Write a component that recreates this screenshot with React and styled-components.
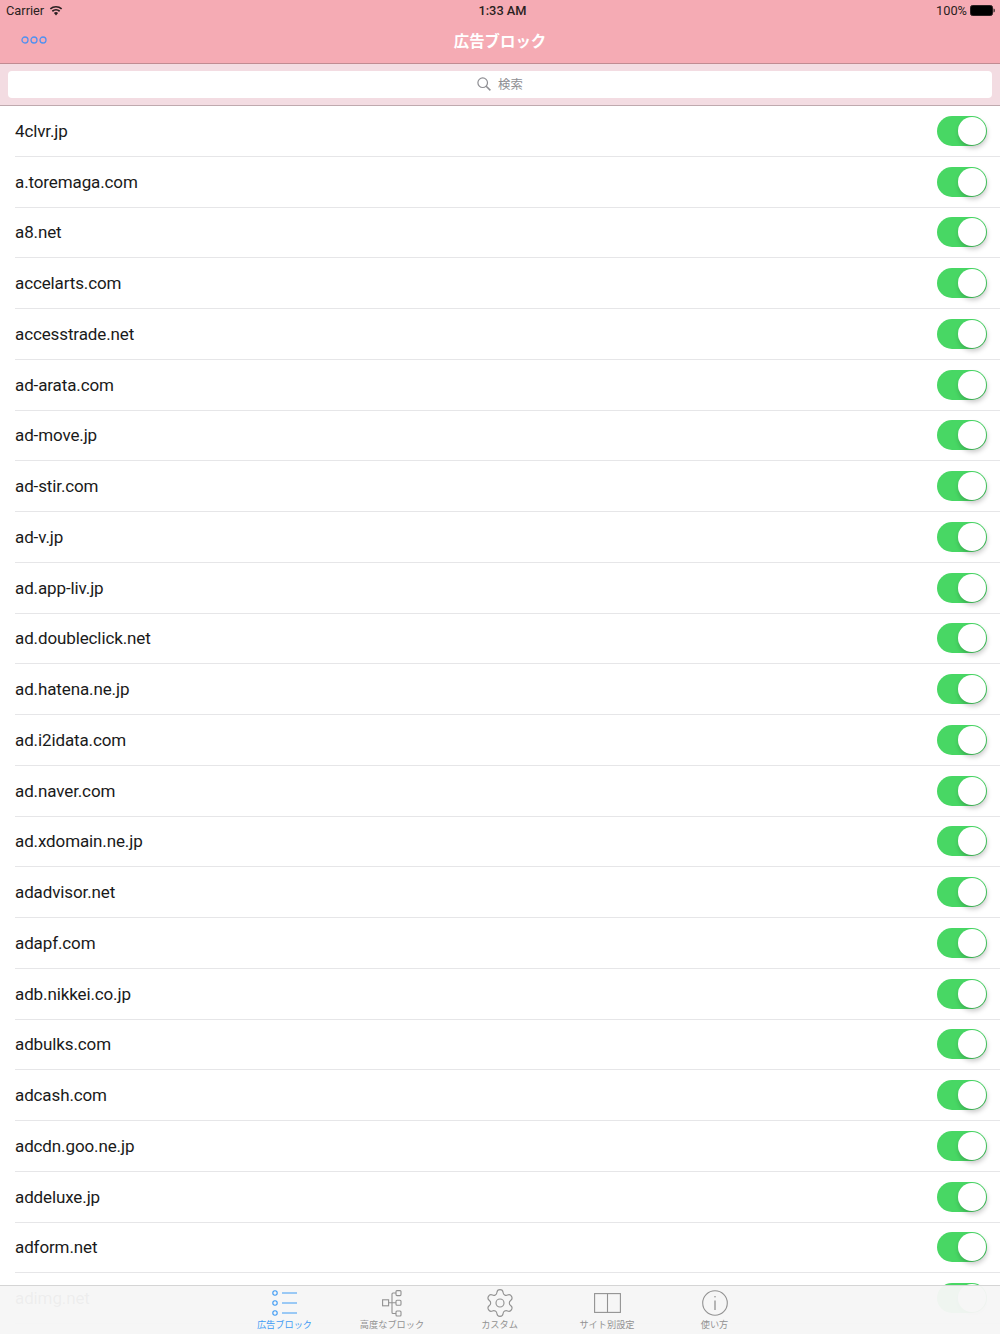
import styled, { createGlobalStyle } from 'styled-components'
import { Settings } from 'lucide-react'

const hosts = [
  '4clvr.jp', 'a.toremaga.com', 'a8.net', 'accelarts.com', 'accesstrade.net', 'ad-arata.com',
  'ad-move.jp', 'ad-stir.com', 'ad-v.jp', 'ad.app-liv.jp', 'ad.doubleclick.net', 'ad.hatena.ne.jp',
  'ad.i2idata.com', 'ad.naver.com', 'ad.xdomain.ne.jp', 'adadvisor.net', 'adapf.com', 'adb.nikkei.co.jp',
  'adbulks.com', 'adcash.com', 'adcdn.goo.ne.jp', 'addeluxe.jp', 'adform.net', 'adimg.net',
]

const GlobalStyle = createGlobalStyle`
  html, body {
    margin: 0;
    padding: 0;
    background: #fff;
  }
  body {
    font-family: Roboto, "Noto Sans CJK JP", sans-serif;
  }
`

const Screen = styled.div`
  position: relative;
  width: 1000px;
  height: 1334px;
  overflow: hidden;
  background: #fff;
`

const NavBar = styled.header`
  height: 63px;
  background: #f5abb4;
  border-bottom: 1px solid #c08b92;
  display: flex;
  flex-direction: column;
`

const StatusBar = styled.div`
  height: 21px;
  padding: 0 5px 0 6px;
  display: grid;
  grid-template-columns: 1fr auto 1fr;
  align-items: center;
  font-size: 12.8px;
  color: #2a1f21;
`

const StatusLeft = styled.div`
  display: flex;
  align-items: center;
  gap: 5px;
`

const StatusRight = styled.div`
  display: flex;
  align-items: center;
  justify-content: flex-end;
  gap: 3px;
`

const Clock = styled.div`
  font-weight: 500;
  padding-left: 4px;
`

const NavRow = styled.div`
  flex: 1;
  display: grid;
  grid-template-columns: 1fr auto 1fr;
  align-items: center;
  padding-bottom: 4px;
`

const MoreCell = styled.div`
  padding-left: 21px;
  display: flex;
  margin-bottom: 1px;
`

const NavTitle = styled.div`
  font-family: "Noto Sans CJK JP", sans-serif;
  font-size: 15.4px;
  font-weight: 700;
  color: #fff;
`

const SearchBar = styled.div`
  height: 42px;
  box-sizing: border-box;
  padding: 7px 8px;
  background: #f3dce2;
  border-bottom: 1px solid #bfa9ae;
`

const SearchField = styled.div`
  height: 27px;
  box-sizing: border-box;
  padding-bottom: 2px;
  background: #fff;
  border-radius: 4px;
  display: flex;
  align-items: center;
  justify-content: center;
  gap: 7px;
  font-family: "Noto Sans CJK JP", sans-serif;
  font-size: 12.4px;
  color: #8e8e93;
`

const List = styled.div`
  display: flex;
  flex-direction: column;
`

const Row = styled.div`
  position: relative;
  height: 50.75px;
  box-sizing: border-box;
  padding: 0 13px 1px 15px;
  display: flex;
  align-items: center;
  justify-content: space-between;
  font-size: 17px;
  letter-spacing: -0.12px;
  color: #1a1a1a;
  &::after {
    content: '';
    position: absolute;
    left: 15px;
    right: 0;
    bottom: 0;
    height: 1px;
    background: #e6e6e8;
  }
`

const Toggle = styled.div`
  position: relative;
  width: 50px;
  height: 30px;
  border-radius: 15px;
  background: #48d764;
`

const Knob = styled.div`
  position: absolute;
  top: 1px;
  right: 1px;
  width: 28px;
  height: 28px;
  border-radius: 50%;
  background: #fff;
  box-shadow: 1px 3px 5px rgba(0, 0, 0, 0.22);
`

const TabBar = styled.nav`
  position: absolute;
  left: 0;
  right: 0;
  bottom: 0;
  height: 48px;
  padding-right: 1px;
  background: rgba(246, 246, 246, 0.96);
  border-top: 1px solid #d5d5d5;
  display: flex;
  justify-content: center;
`

const Tab = styled.div`
  width: 107.5px;
  padding-top: 1px;
  display: flex;
  flex-direction: column;
  align-items: center;
  font-family: "Noto Sans CJK JP", sans-serif;
  font-size: 9.2px;
  color: ${(props) => (props.$active ? '#3f9bf4' : '#929292')};
`

const TabIcon = styled.div`
  height: 32px;
  display: flex;
  align-items: center;
  justify-content: center;
`

const TabLabel = styled.div`
  line-height: 11px;
`

function Wifi() {
  return (
    <svg width="14" height="11" viewBox="0 0 14 11" fill="#2a1f21">
      <path d="M7 10.5 4.9 8a3.2 3.2 0 0 1 4.2 0Z" />
      <path d="M3.9 6.9 2.8 5.6a6.4 6.4 0 0 1 8.4 0L10.100 6.900a4.700 4.700 0 0 0-6.200 0Z" />
      <path d="M1.900 4.500 0.800 3.200a9.500 9.500 0 0 1 12.400 0L12.100 4.500a7.800 7.800 0 0 0-10.200 0Z" />
    </svg>
  )
}

function Battery() {
  return (
    <svg width="25" height="11" viewBox="0 0 25 11">
      <rect x="0.500" y="0.500" width="22" height="10" rx="2" fill="#000" stroke="#2a1f21" />
      <path d="M23.500 3.500c1 0 1.300.8 1.300 2s-.3 2-1.300 2Z" fill="#2a1f21" />
    </svg>
  )
}

function MoreIcon() {
  return (
    <svg width="26" height="8" viewBox="0 0 26 8" fill="none" stroke="#4f90f0" strokeWidth="1.300">
      <circle cx="4" cy="4" r="3" />
      <circle cx="13" cy="4" r="3" />
      <circle cx="22" cy="4" r="3" />
    </svg>
  )
}

function SearchIcon() {
  return (
    <svg width="14" height="14" viewBox="0 0 14 14" fill="none" stroke="#8e8e93" strokeWidth="1.200">
      <circle cx="5.700" cy="5.700" r="4.800" />
      <path d="M9.200 9.200 13.400 13.400" strokeWidth="1.500" />
    </svg>
  )
}

function ListIcon() {
  return (
    <svg width="26" height="26" viewBox="0 0 26 26" fill="none" stroke="#3f9bf4" strokeWidth="1.100">
      <circle cx="3" cy="3" r="2.200" />
      <circle cx="3" cy="13" r="2.200" />
      <circle cx="3" cy="23" r="2.200" />
      <path d="M10 3H25M10 13H25M10 23H25" />
    </svg>
  )
}

function TreeIcon() {
  return (
    <svg width="20" height="27" viewBox="0 0 20 27" fill="none" stroke="#929292" strokeWidth="1.100">
      <rect x="0.600" y="9.800" width="6" height="6" />
      <rect x="14" y="0.600" width="5" height="5" rx="1" />
      <rect x="14" y="10.300" width="5" height="5" rx="1" />
      <rect x="14" y="21" width="5" height="5" rx="1" />
      <path d="M6.600 12.800H14M14 3H11Q10 3 10 4V22.500Q10 23.500 11 23.500H14" />
    </svg>
  )
}

function BookIcon() {
  return (
    <svg width="27" height="20" viewBox="0 0 27 20" fill="none" stroke="#929292" strokeWidth="1.100">
      <rect x="0.600" y="0.600" width="25.800" height="18.800" />
      <path d="M13.500 0.600V19.400" />
    </svg>
  )
}

function InfoIcon() {
  return (
    <svg width="26" height="26" viewBox="0 0 26 26" fill="none" stroke="#929292" strokeWidth="1.100">
      <circle cx="13" cy="13" r="12.300" />
      <path d="M13 10.500V20" strokeWidth="1.300" />
      <circle cx="13" cy="6.800" r="0.800" fill="#929292" stroke="none" />
    </svg>
  )
}

function App() {
  return (
    <Screen>
      <GlobalStyle />
      <NavBar>
        <StatusBar>
          <StatusLeft>
            Carrier
            <Wifi />
          </StatusLeft>
          <Clock>1:33 AM</Clock>
          <StatusRight>
            100%
            <Battery />
          </StatusRight>
        </StatusBar>
        <NavRow>
          <MoreCell>
            <MoreIcon />
          </MoreCell>
          <NavTitle>広告ブロック</NavTitle>
        </NavRow>
      </NavBar>
      <SearchBar>
        <SearchField>
          <SearchIcon />
          検索
        </SearchField>
      </SearchBar>
      <List>
        {hosts.map((host) => (
          <Row key={host}>
            {host}
            <Toggle>
              <Knob />
            </Toggle>
          </Row>
        ))}
      </List>
      <TabBar>
        <Tab $active>
          <TabIcon>
            <ListIcon />
          </TabIcon>
          <TabLabel>広告ブロック</TabLabel>
        </Tab>
        <Tab>
          <TabIcon>
            <TreeIcon />
          </TabIcon>
          <TabLabel>高度なブロック</TabLabel>
        </Tab>
        <Tab>
          <TabIcon>
            <Settings size={32} strokeWidth={0.85} />
          </TabIcon>
          <TabLabel>カスタム</TabLabel>
        </Tab>
        <Tab>
          <TabIcon>
            <BookIcon />
          </TabIcon>
          <TabLabel>サイト別設定</TabLabel>
        </Tab>
        <Tab>
          <TabIcon>
            <InfoIcon />
          </TabIcon>
          <TabLabel>使い方</TabLabel>
        </Tab>
      </TabBar>
    </Screen>
  )
}

export default App
